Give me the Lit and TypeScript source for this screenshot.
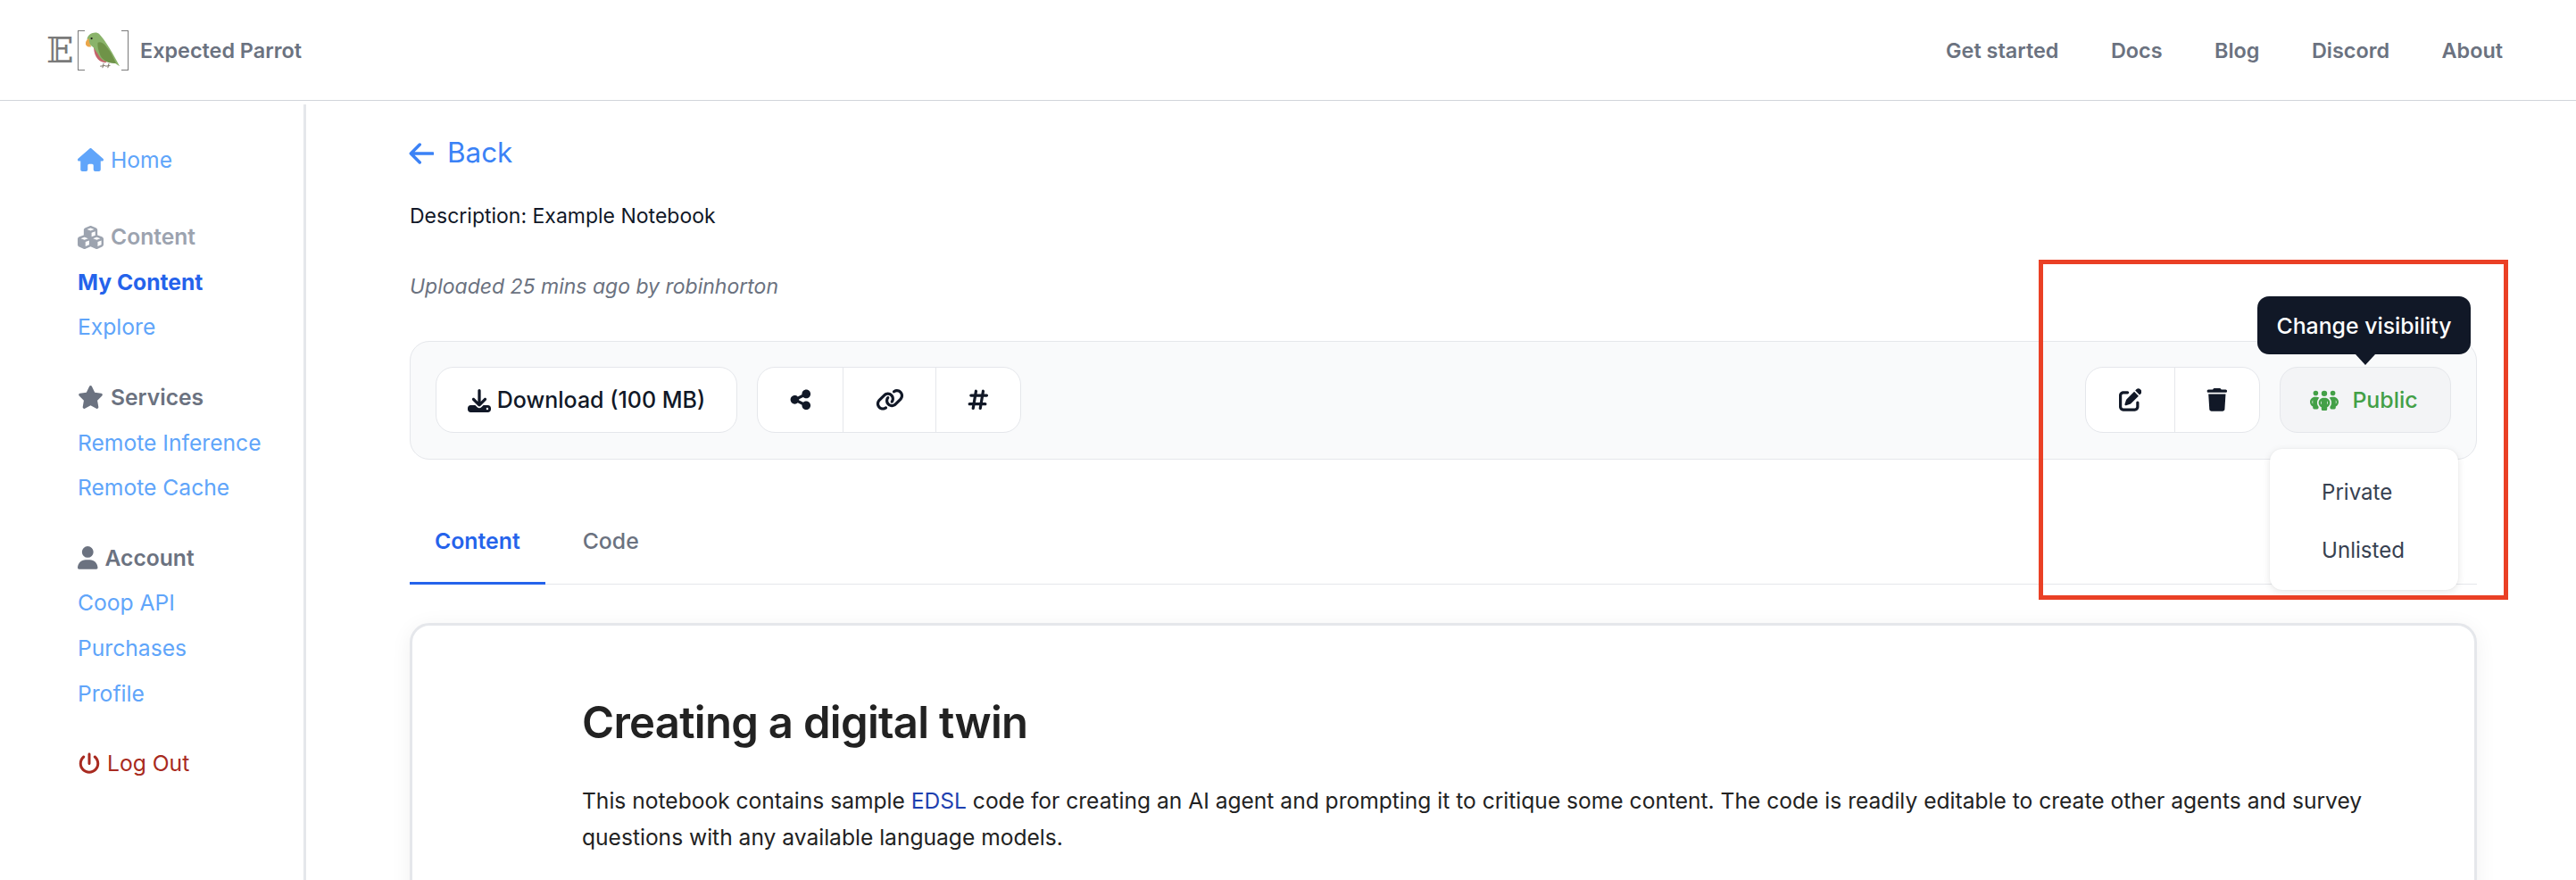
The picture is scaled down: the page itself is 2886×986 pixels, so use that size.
import { LitElement, html, css } from 'lit';
import { customElement } from 'lit/decorators.js';

const ICONS: Record<string, [string, string]> = {
  house: ['0 0 576 512', 'M575.8 255.5c0 18-15 32.1-32 32.1h-32l.7 160.2c0 2.7-.2 5.4-.5 8.1V472c0 22.1-17.9 40-40 40H456c-1.1 0-2.2 0-3.3-.1c-1.4 .1-2.8 .1-4.2 .1H416 392c-22.1 0-40-17.9-40-40V448 384c0-17.7-14.3-32-32-32H256c-17.7 0-32 14.3-32 32v64 24c0 22.1-17.9 40-40 40H160 128.1c-1.5 0-3-.1-4.5-.2c-1.2 .1-2.4 .2-3.6 .2H104c-22.1 0-40-17.9-40-40V360c0-.9 0-1.9 .1-2.8V287.6H32c-18 0-32-14-32-32.1c0-9 3-17 10-24L266.4 8c7-7 15-8 22-8s15 2 21 7L564.8 231.5c8 7 12 15 11 24z'],
  cubes: ['0 0 576 512', 'M290.8 48.6l78.4 29.7L288 109.5 206.8 78.3l78.4-29.7c1.8-.7 3.8-.7 5.7 0zM136 92.5V204.7c-1.3 .4-2.6 .8-3.9 1.3l-96 36.4C14.4 250.6 0 271.5 0 294.7V413.9c0 22.2 13.1 42.3 33.5 51.3l96 42.2c14.4 6.3 30.7 6.3 45.1 0L288 457.5l113.5 49.9c14.4 6.3 30.7 6.3 45.1 0l96-42.2c20.3-8.9 33.5-29.1 33.5-51.3V294.7c0-23.3-14.4-44.1-36.1-52.4l-96-36.4c-1.3-.5-2.6-.9-3.9-1.3V92.5c0-23.3-14.4-44.1-36.1-52.4l-96-36.4c-12.8-4.8-26.9-4.8-39.7 0l-96 36.4C150.4 48.4 136 69.3 136 92.5zM392 210.6l-82.4 31.2V152.6L392 121v89.6zM154.8 250.9l78.4 29.7L152 311.7 70.8 280.6l78.4-29.7c1.8-.7 3.8-.7 5.7 0zm18.8 204.4V354.8L256 323.2v95.9l-82.4 36.2zM421.2 250.9c1.8-.7 3.8-.7 5.7 0l78.4 29.7L424 311.7l-81.2-31.1 78.4-29.7zM523.2 421.2l-77.6 34.1V354.8L528 323.2v90.7c0 3.2-1.9 6-4.8 7.3z'],
  star: ['0 0 576 512', 'M316.9 18C311.6 7 300.4 0 288.1 0s-23.4 7-28.8 18L195 150.3 51.4 171.5c-12 1.8-22 10.2-25.7 21.7s-.7 24.2 7.9 32.7L137.8 329 113.2 474.7c-2 12 3 24.2 12.9 31.3s23 8 33.8 2.3l128.3-68.5 128.3 68.5c10.8 5.7 23.9 4.9 33.8-2.3s14.9-19.3 12.9-31.3L438.5 329 542.7 225.9c8.6-8.5 11.7-21.2 7.9-32.7s-13.7-19.9-25.7-21.7L381.2 150.3 316.9 18z'],
  user: ['0 0 448 512', 'M224 256A128 128 0 1 0 224 0a128 128 0 1 0 0 256zm-45.7 48C79.8 304 0 383.8 0 482.3C0 498.7 13.3 512 29.7 512H418.3c16.4 0 29.7-13.3 29.7-29.7C448 383.8 368.2 304 269.7 304H178.3z'],
  power: ['0 0 512 512', 'M288 32c0-17.7-14.3-32-32-32s-32 14.3-32 32V256c0 17.7 14.3 32 32 32s32-14.3 32-32V32zM143.5 120.6c13.6-11.3 15.4-31.5 4.1-45.1s-31.5-15.4-45.1-4.1C49.7 115.4 16 181.8 16 256c0 132.5 107.5 240 240 240s240-107.5 240-240c0-74.2-33.8-140.6-86.6-184.6c-13.6-11.3-33.8-9.4-45.1 4.1s-9.4 33.8 4.1 45.1c38.9 32.3 63.5 81 63.5 135.4c0 97.2-78.8 176-176 176s-176-78.8-176-176c0-54.4 24.7-103.1 63.5-135.4z'],
  download: ['0 0 512 512', 'M288 32c0-17.7-14.3-32-32-32s-32 14.3-32 32V274.7l-73.4-73.4c-12.5-12.5-32.8-12.5-45.3 0s-12.5 32.8 0 45.3l128 128c12.5 12.5 32.8 12.5 45.3 0l128-128c12.5-12.5 12.5-32.8 0-45.3s-32.8-12.5-45.3 0L288 274.7V32zM64 352c-35.3 0-64 28.7-64 64v32c0 35.3 28.7 64 64 64H448c35.3 0 64-28.7 64-64V416c0-35.3-28.7-64-64-64H346.5l-45.3 45.3c-25 25-65.5 25-90.5 0L165.5 352H64zm368 56a24 24 0 1 1 0 48 24 24 0 1 1 0-48z'],
  share: ['0 0 448 512', 'M352 224c53 0 96-43 96-96s-43-96-96-96s-96 43-96 96c0 4 .2 8 .7 11.9l-94.1 47C145.4 170.2 121.9 160 96 160c-53 0-96 43-96 96s43 96 96 96c25.9 0 49.4-10.2 66.6-26.9l94.1 47c-.5 3.9-.7 7.8-.7 11.9c0 53 43 96 96 96s96-43 96-96s-43-96-96-96c-25.9 0-49.4 10.2-66.6 26.9l-94.1-47c.5-3.9 .7-7.8 .7-11.9s-.2-8-.7-11.9l94.1-47C302.6 213.8 326.1 224 352 224z'],
  link: ['0 0 640 512', 'M579.8 267.7c56.5-56.5 56.5-148 0-204.5c-50-50-128.8-56.5-186.3-15.4l-1.6 1.1c-14.4 10.3-17.7 30.3-7.4 44.6s30.3 17.7 44.6 7.4l1.6-1.1c32.1-22.9 76-19.3 103.8 8.6c31.5 31.5 31.5 82.5 0 114L422.3 334.8c-31.5 31.5-82.5 31.5-114 0c-27.9-27.9-31.5-71.8-8.6-103.8l1.1-1.6c10.3-14.4 6.9-34.4-7.4-44.6s-34.4-6.9-44.6 7.4l-1.1 1.6C206.5 251.2 213 330 263 380c56.5 56.5 148 56.5 204.5 0L579.8 267.7zM60.2 244.3c-56.5 56.5-56.5 148 0 204.5c50 50 128.8 56.5 186.3 15.4l1.6-1.1c14.4-10.3 17.7-30.3 7.4-44.6s-30.3-17.7-44.6-7.4l-1.6 1.1c-32.1 22.9-76 19.3-103.8-8.6C74 372 74 321 105.5 289.5L217.7 177.2c31.5-31.5 82.5-31.5 114 0c27.9 27.9 31.5 71.8 8.6 103.9l-1.1 1.6c-10.3 14.4-6.9 34.4 7.4 44.6s34.4 6.9 44.6-7.4l1.1-1.6C433.5 260.8 427 182 377 132c-56.5-56.5-148-56.5-204.5 0L60.2 244.3z'],
  hash: ['0 0 448 512', 'M181.3 32.4c17.4 2.9 29.2 19.4 26.3 36.8L197.8 128h95.1l11.5-69.3c2.9-17.4 19.4-29.2 36.8-26.3s29.2 19.4 26.3 36.8L357.8 128H416c17.7 0 32 14.3 32 32s-14.3 32-32 32H347.1L325.8 320H384c17.7 0 32 14.3 32 32s-14.3 32-32 32H315.1l-11.5 69.3c-2.9 17.4-19.4 29.2-36.8 26.3s-29.2-19.4-26.3-36.8l9.8-58.7H155.1l-11.5 69.3c-2.9 17.4-19.4 29.2-36.8 26.3s-29.2-19.4-26.3-36.8L90.2 384H32c-17.7 0-32-14.3-32-32s14.3-32 32-32h68.9l21.3-128H64c-17.7 0-32-14.3-32-32s14.3-32 32-32h68.9l11.5-69.3c2.9-17.4 19.4-29.2 36.8-26.3zM187.1 192L165.8 320h95.1l21.3-128H187.1z'],
  edit: ['0 0 512 512', 'M471.6 21.7c-21.9-21.9-57.3-21.9-79.2 0L362.3 51.7l97.9 97.9 30.1-30.1c21.9-21.9 21.9-57.3 0-79.2L471.6 21.7zm-299.2 220c-6.1 6.1-10.8 13.6-13.5 21.9l-29.6 88.8c-2.9 8.6-.6 18.1 5.8 24.6s15.9 8.7 24.6 5.8l88.8-29.6c8.2-2.7 15.7-7.4 21.9-13.5L437.7 172.3 339.7 74.3 172.4 241.7zM96 64C43 64 0 107 0 160V416c0 53 43 96 96 96H352c53 0 96-43 96-96V320c0-17.7-14.3-32-32-32s-32 14.3-32 32v96c0 17.7-14.3 32-32 32H96c-17.7 0-32-14.3-32-32V160c0-17.7 14.3-32 32-32h96c17.7 0 32-14.3 32-32s-14.3-32-32-32H96z'],
  trash: ['0 0 448 512', 'M135.2 17.7L128 32H32C14.3 32 0 46.3 0 64S14.3 96 32 96H416c17.7 0 32-14.3 32-32s-14.3-32-32-32H320l-7.2-14.3C307.4 6.8 296.3 0 284.2 0H163.8c-12.1 0-23.2 6.8-28.6 17.7zM416 128H32L53.2 467c1.6 25.3 22.6 45 47.9 45H346.9c25.3 0 46.3-19.7 47.9-45L416 128z'],
  people: ['0 0 640 512', 'M72 88a56 56 0 1 1 112 0A56 56 0 1 1 72 88zM64 245.7C54 256.9 48 271.8 48 288s6 31.1 16 42.3V245.7zm144.4-49.3C178.7 222.7 160 261.2 160 304c0 34.3 12 65.8 32 90.5V416c0 17.7-14.3 32-32 32H96c-17.7 0-32-14.3-32-32V389.2C26.2 371.2 0 332.7 0 288c0-61.9 50.1-112 112-112h32c24 0 46.2 7.5 64.4 20.3zM448 416V394.5c20-24.7 32-56.2 32-90.5c0-42.8-18.7-81.3-48.4-107.7C449.8 183.5 472 176 496 176h32c61.9 0 112 50.1 112 112c0 44.7-26.2 83.2-64 101.2V416c0 17.7-14.3 32-32 32H480c-17.7 0-32-14.3-32-32zm8-328a56 56 0 1 1 112 0A56 56 0 1 1 456 88zM576 245.7v84.7c10-11.3 16-26.1 16-42.3s-6-31.1-16-42.3zM320 32a64 64 0 1 1 0 128 64 64 0 1 1 0-128zM240 304c0 16.2 6 31 16 42.3V261.7c-10 11.3-16 26.1-16 42.3zm144-42.3v84.7c10-11.3 16-26.1 16-42.3s-6-31.1-16-42.3zM448 304c0 44.7-26.2 83.2-64 101.2V448c0 17.7-14.3 32-32 32H288c-17.7 0-32-14.3-32-32V405.2c-37.8-18-64-56.5-64-101.2c0-61.9 50.1-112 112-112h32c61.9 0 112 50.1 112 112z'],
};

const icon = (name: string, cls = '') => {
  const [box, d] = ICONS[name];
  return html`<svg class="icon ${cls}" viewBox=${box} fill="currentColor"><path d=${d}></path></svg>`;
};

const NAV = ['Get started', 'Docs', 'Blog', 'Discord', 'About'];

@customElement('app-root')
export class AppRoot extends LitElement {
  static styles = css`
    :host {
      display: block;
      position: relative;
      height: 986px;
      overflow: hidden;
      background: #fff;
      font-family: Inter, 'Liberation Sans', sans-serif;
      font-size: 25px;
      line-height: 41px;
      color: #1f2937;
    }
    .icon {
      display: block;
      flex: none;
    }

    /* top bar */
    .topbar {
      height: 112px;
      box-sizing: content-box;
      border-bottom: 1.5px solid #d1d5db;
      display: flex;
      align-items: center;
      justify-content: space-between;
      padding: 0 82px 0 52px;
    }
    .brand {
      display: flex;
      align-items: center;
      color: #6b7280;
      font-weight: 600;
      font-size: 23.4px;
    }
    .logo {
      display: flex;
      align-items: center;
      height: 44px;
      margin-right: 13px;
    }
    .logo-e {
      width: 35px;
      font-family: 'DejaVu Serif', serif;
      font-weight: 400;
      font-size: 40px;
      line-height: 44px;
      color: #7a7a7a;
    }
    .bracket {
      width: 7px;
      height: 43px;
      border: 1.5px solid #7a7a7a;
    }
    .bracket.open {
      border-right: none;
    }
    .bracket.close {
      border-left: none;
    }
    .parrot {
      width: 38px;
      height: 41px;
      margin: 0 2px 0 1px;
    }
    .topnav {
      display: flex;
      gap: 58.5px;
      color: #6b7280;
      font-weight: 600;
      font-size: 23.4px;
    }

    /* page body */
    .page {
      display: flex;
    }
    .side {
      width: 253px;
      height: 869px;
      margin-top: 4px;
      padding: 36.8px 0 0 87px;
      border-right: 3px solid #e5e7eb;
      flex: none;
      font-size: 24.65px;
    }
    .side-item {
      display: flex;
      align-items: center;
      height: 50.6px;
      color: #60a5fa;
    }
    .side-item.first {
      margin-bottom: 36px;
    }
    .side-head {
      display: flex;
      align-items: center;
      height: 50.6px;
      gap: 8px;
      margin-top: 28px;
      font-weight: 600;
      color: #6b7280;
    }
    .side-head.first {
      margin-top: 0;
    }
    .side-head.muted {
      color: #9ca3af;
    }
    .side-item.active {
      color: #2563eb;
      font-weight: 700;
    }
    .side-item.logout {
      margin: 28px 0 0 1px;
      color: #a82a20;
      gap: 8px;
    }
    .side-home {
      gap: 8px;
    }
    .w29 {
      width: 29px;
      height: 26px;
    }
    .w22 {
      width: 22.5px;
      height: 25.7px;
    }
    .w24 {
      width: 24px;
      height: 25px;
    }

    .main {
      flex: 1;
      min-width: 0;
      margin: 0 111px 0 116px;
      padding-top: 36px;
    }
    .back {
      display: flex;
      align-items: center;
      gap: 15px;
      height: 45px;
      margin-left: -1px;
      color: #3b82f6;
      font-size: 31.4px;
    }
    .back svg {
      width: 28px;
      height: 28px;
    }
    .desc {
      margin-top: 27.5px;
      color: #111827;
      font-size: 23px;
    }
    .uploaded {
      margin-top: 38.5px;
      color: #6b7280;
      font-style: italic;
      font-size: 23px;
    }

    /* action bar */
    .actions {
      display: flex;
      align-items: center;
      justify-content: space-between;
      margin-top: 39.5px;
      height: 133.5px;
      box-sizing: border-box;
      padding: 0 28px;
      background: #f9fafb;
      border: 1.5px solid #e5e7eb;
      border-radius: 22px;
    }
    .group {
      display: flex;
      gap: 22px;
    }
    .btn {
      display: flex;
      align-items: center;
      justify-content: center;
      box-sizing: border-box;
      height: 73.6px;
      padding-top: 1px;
      background: #fff;
      border: 1.5px solid #e5e7eb;
      border-radius: 20px;
      color: #111827;
      font-weight: 500;
    }
    .btn.download {
      width: 338px;
      gap: 7px;
    }
    .btn.download svg {
      width: 26px;
      height: 26px;
    }
    .joined {
      display: flex;
      height: 73.6px;
      box-sizing: border-box;
      background: #fff;
      border: 1.5px solid #e5e7eb;
      border-radius: 20px;
      color: #111827;
    }
    .joined > div {
      display: flex;
      align-items: center;
      justify-content: center;
      box-sizing: border-box;
      border-left: 1.5px solid #e5e7eb;
    }
    .joined > div:first-child {
      border-left: none;
    }
    .c95 {
      width: 95px;
    }
    .c104 {
      width: 104px;
    }
    .c99 {
      width: 99px;
    }
    .joined svg {
      height: 25.7px;
      width: 25.7px;
    }
    .joined .link {
      width: 32px;
    }
    .public-wrap {
      position: relative;
    }
    .btn.public {
      width: 192px;
      gap: 15px;
      padding-right: 3px;
      background: #f3f4f6;
      color: #43a047;
      font-size: 24.9px;
    }
    .btn.public svg {
      width: 32px;
      height: 25.7px;
    }
    .tooltip {
      position: absolute;
      left: -25px;
      top: -79.5px;
      width: 239px;
      height: 65px;
      box-sizing: border-box;
      padding-top: 2px;
      display: flex;
      align-items: center;
      justify-content: center;
      background: #111827;
      color: #fff;
      font-weight: 500;
      font-size: 24.8px;
      border-radius: 13px;
    }
    .tooltip::after {
      content: '';
      position: absolute;
      left: 109.5px;
      bottom: -12px;
      width: 0;
      height: 0;
      border-left: 11.5px solid transparent;
      border-right: 11.5px solid transparent;
      border-top: 12px solid #111827;
    }
    .menu {
      position: absolute;
      left: -11px;
      top: 91.5px;
      width: 211px;
      height: 158px;
      box-sizing: border-box;
      padding: 16px 0 0 58px;
      background: #fff;
      border-radius: 14px;
      box-shadow: 0 2px 8px rgba(0, 0, 0, 0.1), 0 0 2px rgba(0, 0, 0, 0.06);
      color: #374151;
      font-size: 24.1px;
    }
    .menu div {
      height: 65px;
      display: flex;
      align-items: center;
    }

    /* tabs */
    .tabs {
      display: flex;
      gap: 14px;
      margin-top: 39.5px;
      border-bottom: 1.5px solid #e5e7eb;
      color: #6b7280;
      font-weight: 500;
      font-size: 24.8px;
    }
    .tab {
      padding: 31px 28px 25.5px;
    }
    .tab.on {
      color: #2563eb;
      font-weight: 600;
      margin-bottom: -1.5px;
      border-bottom: 3px solid #2563eb;
    }

    /* notebook card */
    .card {
      margin-top: 43px;
      height: 600px;
      background: #fff;
      border: 3.7px solid #e5e7eb;
      border-radius: 22px;
      padding: 78px 115px 0 190px;
      box-shadow: 0 4px 24px rgba(0, 0, 0, 0.06);
      color: #222;
      font-size: 24.58px;
    }
    .card h1 {
      margin: 0 0 36px;
      font-size: 49px;
      line-height: 62px;
      font-weight: 600;
      letter-spacing: -0.7px;
    }
    .card p {
      margin: 0;
    }
    .card a {
      color: #1e40af;
    }

    /* red annotation frame */
    .mark {
      position: absolute;
      left: 2284px;
      top: 291px;
      width: 526px;
      height: 381px;
      box-sizing: border-box;
      border: 5px solid #ea4025;
      pointer-events: none;
    }
  `;

  private _parrot() {
    return html`<svg class="parrot" viewBox="195 57 115 123">
      <path d="M222 102 C222 130 232 158 262 160 C270 160 272 140 250 112 Z" fill="#c4646a"></path>
      <path d="M236 118 C244 142 262 162 292 160 L272 124 Z" fill="#5b87c4"></path>
      <path d="M200 78 C204 62 226 52 240 62 C262 84 290 134 310 172 L288 158 C262 162 246 150 236 130 C228 118 222 108 216 104 C208 100 200 90 200 78 Z" fill="#8ab36a"></path>
      <path d="M236 92 C250 84 266 104 280 126 L298 162 C272 164 248 150 242 128 C238 116 234 104 236 92 Z" fill="#6f9348"></path>
      <path d="M206 78 C198 82 192 92 196 100 C200 106 208 108 214 106 C208 98 206 88 206 78 Z" fill="#eaa64a"></path>
      <circle cx="215" cy="78" r="3.4" fill="#1d1d1b"></circle>
      <path d="M256 162 L252 178 M274 162 L270 178 M244 172 L262 170 M262 172 L278 170" stroke="#7c7568" stroke-width="3" fill="none"></path>
    </svg>`;
  }

  private _sidebar() {
    return html`<aside class="side">
      <div class="side-item side-home first">${icon('house', 'w29')}Home</div>
      <div class="side-head first muted">${icon('cubes', 'w29')}Content</div>
      <div class="side-item active">My Content</div>
      <div class="side-item">Explore</div>
      <div class="side-head">${icon('star', 'w29')}Services</div>
      <div class="side-item">Remote Inference</div>
      <div class="side-item">Remote Cache</div>
      <div class="side-head">${icon('user', 'w22')}Account</div>
      <div class="side-item">Coop API</div>
      <div class="side-item">Purchases</div>
      <div class="side-item">Profile</div>
      <div class="side-item logout">${icon('power', 'w24')}Log Out</div>
    </aside>`;
  }

  private _actions() {
    return html`<div class="actions">
      <div class="group">
        <div class="btn download">${icon('download')}Download (100 MB)</div>
        <div class="joined">
          <div class="c95">${icon('share')}</div>
          <div class="c104">${icon('link', 'link')}</div>
          <div class="c95">${icon('hash')}</div>
        </div>
      </div>
      <div class="group">
        <div class="joined">
          <div class="c99">${icon('edit')}</div>
          <div class="c95">${icon('trash')}</div>
        </div>
        <div class="public-wrap">
          <div class="btn public">${icon('people')}Public</div>
          <div class="tooltip">Change visibility</div>
          <div class="menu">
            <div>Private</div>
            <div>Unlisted</div>
          </div>
        </div>
      </div>
    </div>`;
  }

  render() {
    return html`
      <header class="topbar">
        <div class="brand">
          <div class="logo">
            <span class="logo-e">𝔼</span>
            <span class="bracket open"></span>
            ${this._parrot()}
            <span class="bracket close"></span>
          </div>
          Expected Parrot
        </div>
        <nav class="topnav">${NAV.map((n) => html`<span>${n}</span>`)}</nav>
      </header>
      <div class="page">
        ${this._sidebar()}
        <main class="main">
          <div class="back">
            <svg viewBox="0 0 24 24" fill="none" stroke="currentColor" stroke-width="3" stroke-linecap="round" stroke-linejoin="round"><path d="M10.5 3.5 2 12l8.5 8.5M2.5 12H23"></path></svg>
            Back
          </div>
          <div class="desc">Description: Example Notebook</div>
          <div class="uploaded">Uploaded 25 mins ago by robinhorton</div>
          ${this._actions()}
          <div class="tabs">
            <div class="tab on">Content</div>
            <div class="tab">Code</div>
          </div>
          <section class="card">
            <h1>Creating a digital twin</h1>
            <p>This notebook contains sample <a>EDSL</a> code for creating an AI agent and prompting it to critique some content. The code is readily editable to create other agents and survey questions with any available language models.</p>
          </section>
        </main>
      </div>
      <div class="mark"></div>
    `;
  }
}
